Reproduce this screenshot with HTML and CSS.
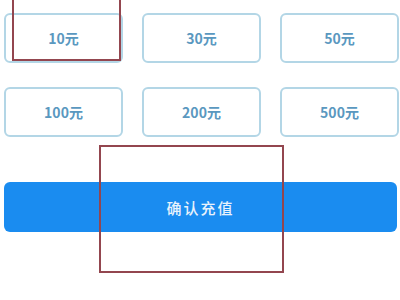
FILE: index.html
```html
<!DOCTYPE html>
<html>
<head>
<meta charset="utf-8">
<link rel="stylesheet" href="styles.css">
</head>
<body>
<div class="page">
  <div class="options">
    <div class="opt">10元</div>
    <div class="opt">30元</div>
    <div class="opt">50元</div>
    <div class="opt">100元</div>
    <div class="opt">200元</div>
    <div class="opt">500元</div>
  </div>
  <div class="confirm">确认充值</div>
  <div class="mark mark-a"></div>
  <div class="mark mark-b"></div>
</div>
</body>
</html>
```
FILE: styles.css
```css
html, body {
  margin: 0;
  padding: 0;
  background: #ffffff;
}
.page {
  position: relative;
  width: 400px;
  height: 300px;
  overflow: hidden;
  padding: 13px 3px 0 4px;
  box-sizing: border-box;
  font-family: "Noto Sans CJK SC", "Noto Sans", sans-serif;
}
.options {
  display: grid;
  grid-template-columns: 119px 119px 119px;
  grid-auto-rows: 50px;
  column-gap: 19px;
  row-gap: 24px;
}
.opt {
  border: 2px solid #b3d6e6;
  border-radius: 6px;
  box-sizing: border-box;
  display: flex;
  align-items: center;
  justify-content: center;
  color: #5a98bf;
  font-size: 14px;
  font-weight: 600;
}
.confirm {
  margin-top: 45px;
  height: 50px;
  width: 393px;
  background: #1a8cf0;
  border-radius: 6px;
  display: flex;
  align-items: center;
  justify-content: center;
  color: #e8f2fc;
  font-size: 15px;
  font-weight: 500;
  letter-spacing: 2px;
}
.mark {
  position: absolute;
  border: 2px solid #93464f;
  box-sizing: border-box;
}
.mark-a {
  left: 12px;
  top: -3px;
  width: 109px;
  height: 64px;
}
.mark-b {
  left: 99px;
  top: 145px;
  width: 185px;
  height: 128px;
}
```
